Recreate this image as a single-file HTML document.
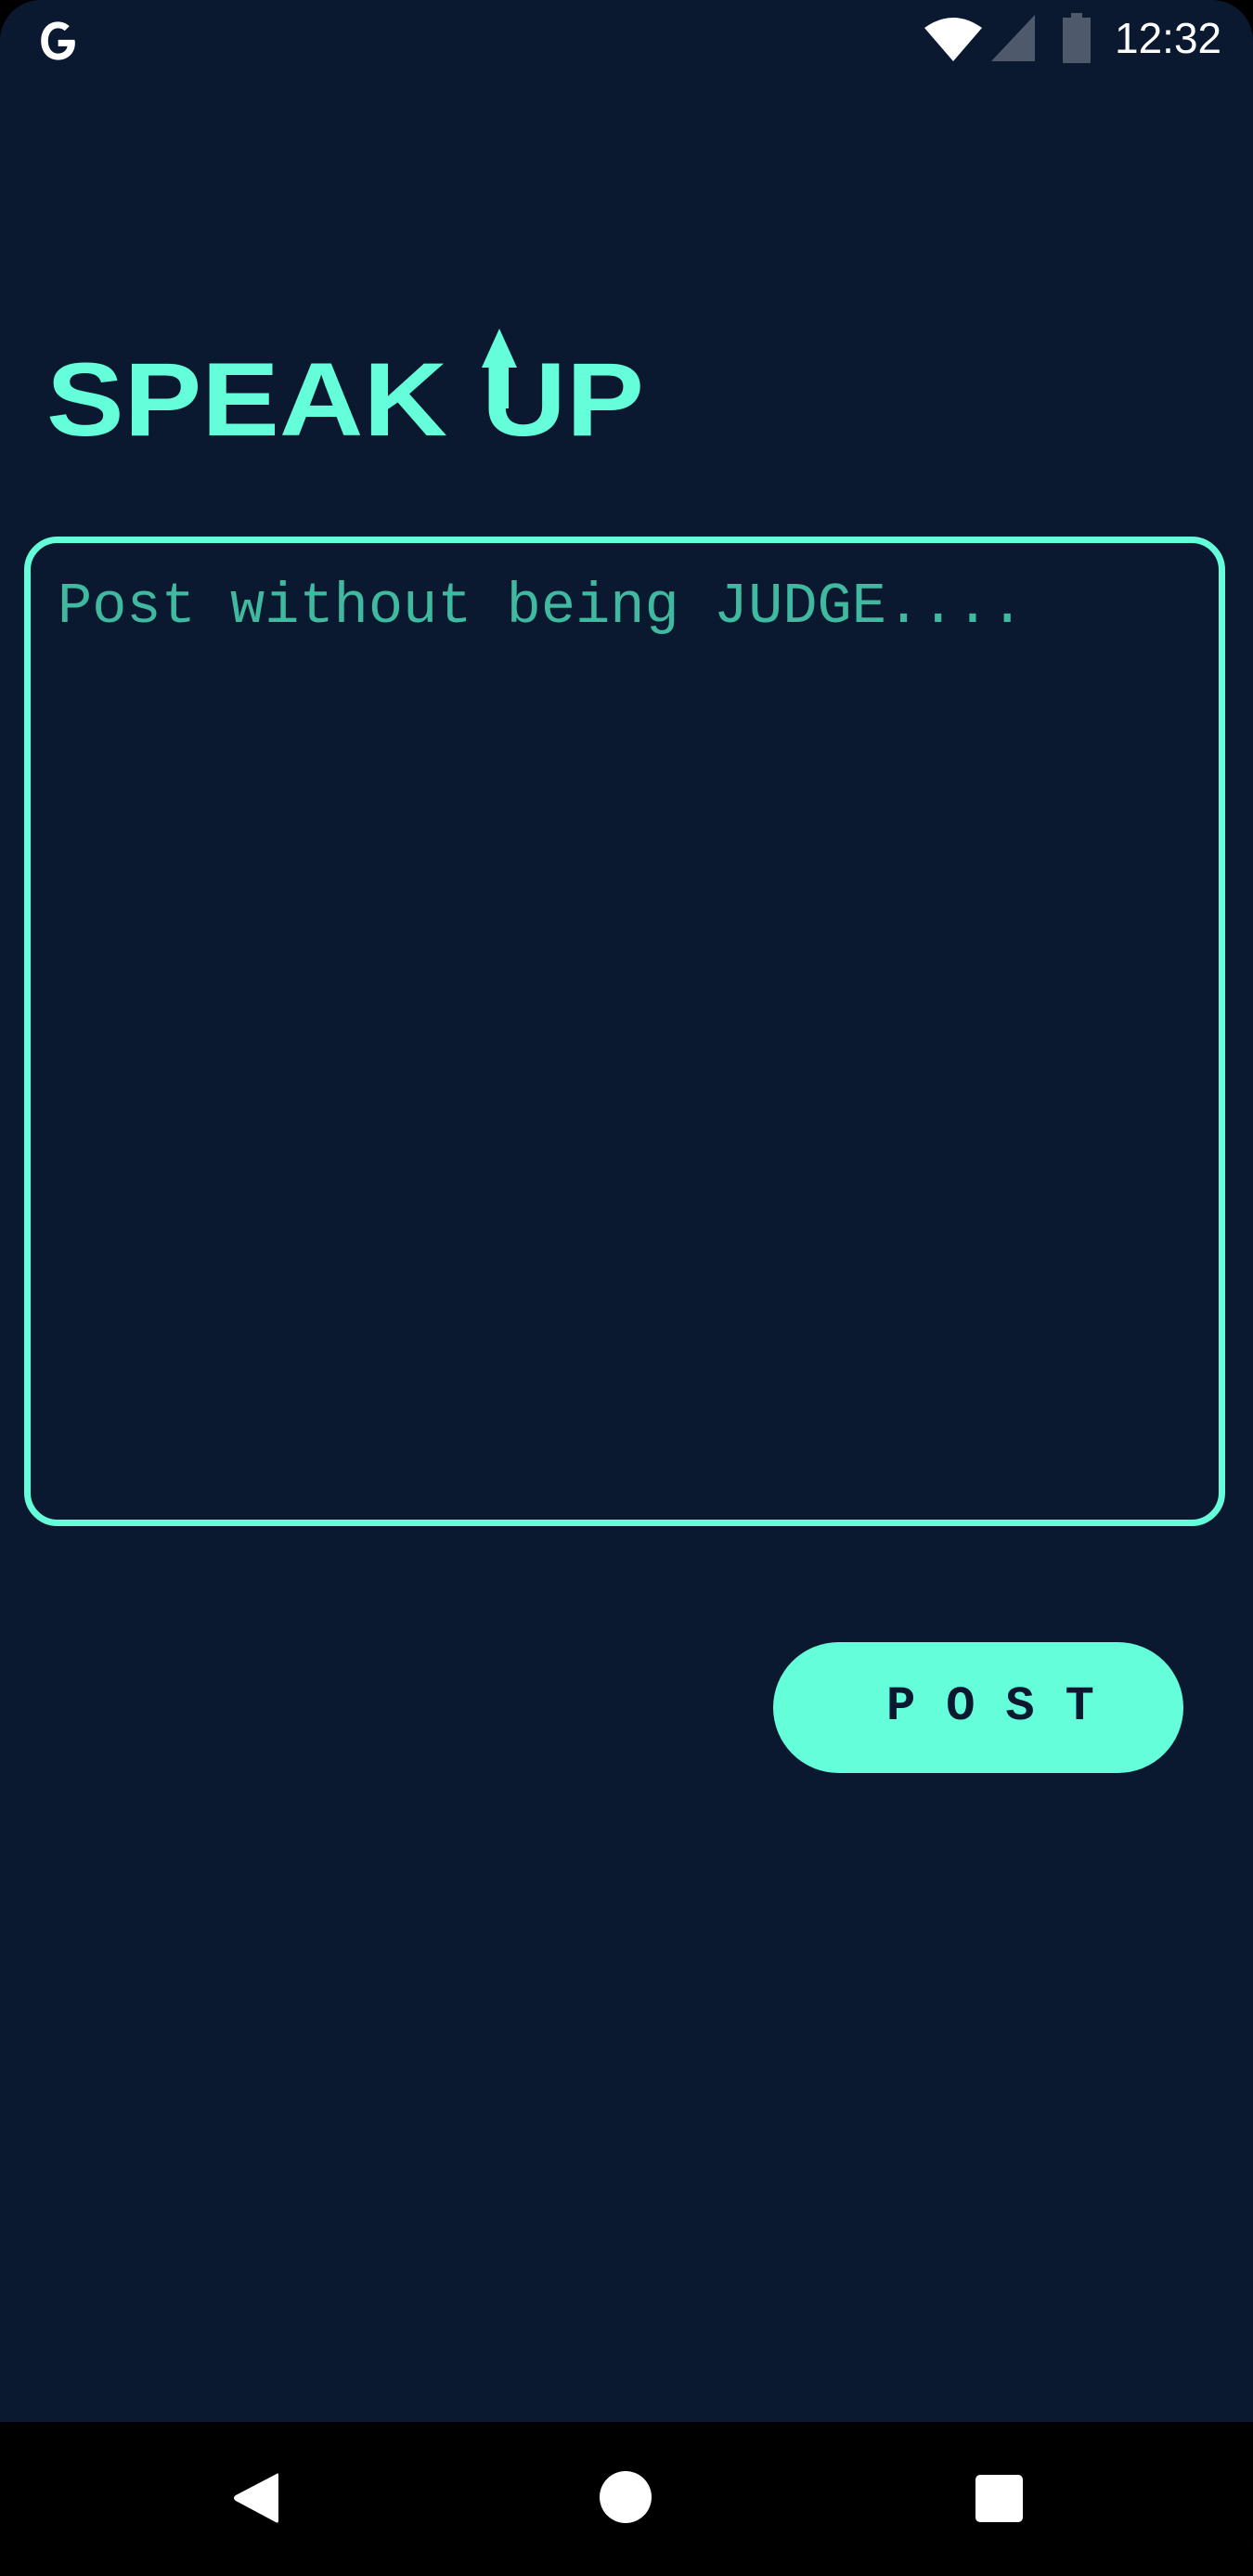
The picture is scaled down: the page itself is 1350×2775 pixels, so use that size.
<!DOCTYPE html>
<html><head><meta charset="utf-8">
<style>
html,body{margin:0;padding:0;background:#000;}
.screen{position:relative;width:1350px;height:2775px;background:#0b1930;overflow:hidden;border-radius:44px 44px 44px 44px;}
.nav{position:absolute;left:0;top:2609px;width:1350px;height:166px;background:#000;}
.box{position:absolute;left:26px;top:578px;width:1280px;height:1052px;border:7px solid #64ffda;border-radius:36px;}
.ph{position:absolute;left:62px;top:616px;font-family:"Liberation Mono",monospace;font-size:62px;color:#3fb9a0;white-space:nowrap;line-height:76px;}
.btn{position:absolute;left:833px;top:1769px;width:442px;height:141px;border-radius:71px;background:#64ffda;}
.btn span{position:absolute;left:122px;top:38px;font-family:"Liberation Mono",monospace;font-weight:bold;font-size:52px;letter-spacing:33px;color:#0b1930;line-height:64px;}
.time{position:absolute;left:1201px;top:10px;font-family:"Liberation Sans",sans-serif;font-size:46px;color:#fff;line-height:62px;}
</style></head><body>
<div class="screen">
  <svg style="position:absolute;left:36px;top:18px" width="52" height="52" viewBox="0 0 24 24"><path d="M20.5 11.5H12.3v3.2h4.6c-.5 2.3-2.4 3.6-4.6 3.6-2.8 0-5-2.3-5-6.3s2.2-6.3 5-6.3c1.3 0 2.4.5 3.3 1.3l2.3-2.3C16.3 3.3 14.4 2.5 12.3 2.5 7.1 2.5 3.8 6.6 3.8 12s3.3 9.5 8.5 9.5c4.9 0 8.4-3.4 8.4-8.4 0-.6-.1-1.1-.2-1.6z" fill="#fff"/></svg>
  <svg style="position:absolute;left:994px;top:16px" width="66" height="52" viewBox="0 0 66 52"><path d="M2 14 Q33 -8 64 14 L33 50 Z" fill="#fff"/></svg>
  <svg style="position:absolute;left:1068px;top:16px" width="48" height="50" viewBox="0 0 48 50"><path d="M47 0 L47 50 L0 50 Z" fill="#4e5a6c"/></svg>
  <svg style="position:absolute;left:1144px;top:14px" width="32" height="54" viewBox="0 0 32 54"><rect x="10" y="0" width="12" height="6" fill="#4e5a6c"/><rect x="1" y="5" width="30" height="49" fill="#4e5a6c"/></svg>
  <div class="time">12:32</div>

  <svg style="position:absolute;left:40px;top:340px" width="680" height="140" viewBox="0 0 680 140">
    <text x="10" y="129" font-family="Liberation Sans Narrow, Liberation Sans, sans-serif" font-weight="bold" font-size="112" fill="#64ffda" textLength="432" lengthAdjust="spacingAndGlyphs">SPEAK</text>
    <text x="479" y="129" font-family="Liberation Sans Narrow, Liberation Sans, sans-serif" font-weight="bold" font-size="112" fill="#64ffda" textLength="175" lengthAdjust="spacingAndGlyphs">UP</text>
    <path d="M498 14 L517 56 L508 56 L508 100 L488 100 L488 56 L479 56 Z" fill="#64ffda"/>
  </svg>

  <div class="box"></div>
  <div class="ph">Post without being JUDGE....</div>

  <div class="btn"><span>POST</span></div>

  <div class="nav">
    <svg style="position:absolute;left:248px;top:52px" width="56" height="60" viewBox="0 0 56 60"><path d="M50 4 Q52 2 52 6 L52 54 Q52 58 49 56 L6 33 Q2 30 6 27 Z" fill="#fff"/></svg>
    <div style="position:absolute;left:646px;top:53px;width:56px;height:56px;border-radius:50%;background:#fff"></div>
    <div style="position:absolute;left:1051px;top:57px;width:51px;height:51px;border-radius:5px;background:#fff"></div>
  </div>
</div>
</body></html>
